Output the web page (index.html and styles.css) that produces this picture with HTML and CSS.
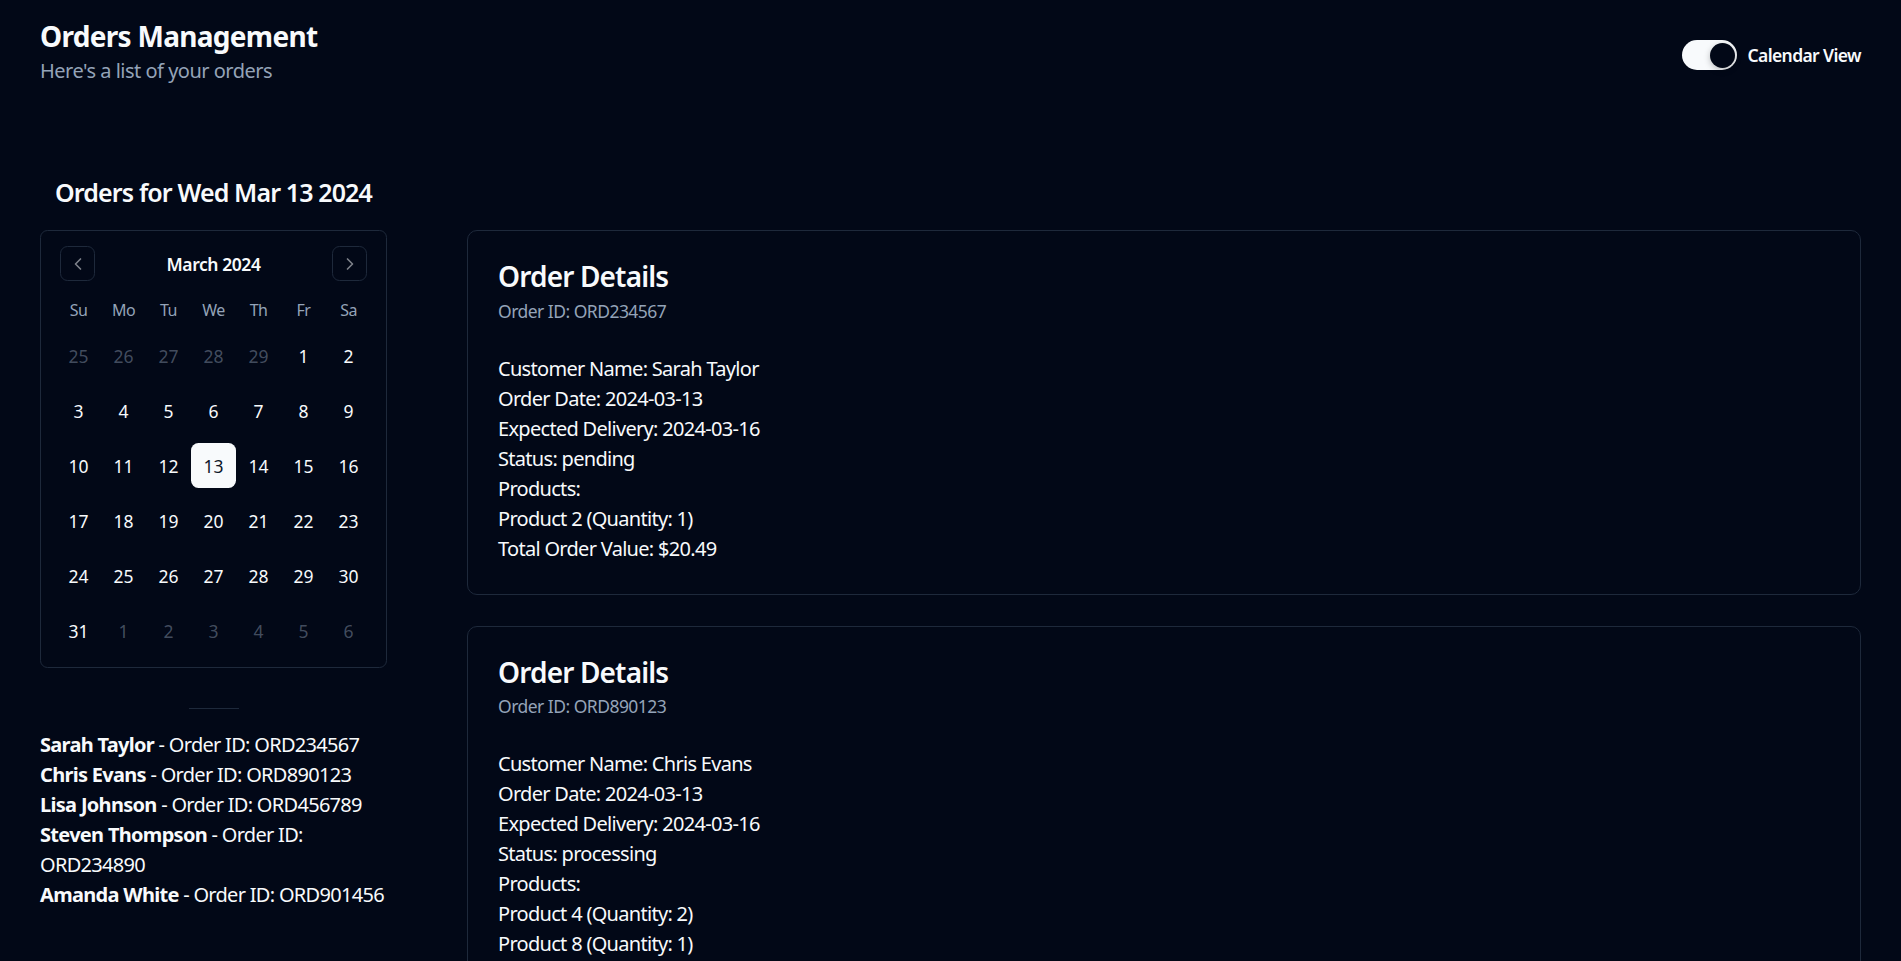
FILE: index.html
```html
<!DOCTYPE html>
<html lang="en">
<head>
<meta charset="utf-8">
<title>Orders Management</title>
<link rel="stylesheet" href="styles.css">
</head>
<body>
<div class="page">
  <header class="top">
    <div class="titles">
      <h1 class="title">Orders Management</h1>
      <p class="subtitle">Here's a list of your orders</p>
    </div>
    <div class="view-toggle">
      <button class="switch on" aria-label="Calendar View"><span class="thumb"></span></button>
      <span class="switch-label">Calendar View</span>
    </div>
  </header>

  <main class="content">
    <aside class="left">
      <h2 class="day-heading">Orders for Wed Mar 13 2024</h2>
      <div class="calendar">
        <div class="caption">
          <button class="nav nav-prev" aria-label="Previous month">
            <svg viewBox="0 0 24 24" width="20" height="20" fill="none" stroke="currentColor" stroke-width="2" stroke-linecap="round" stroke-linejoin="round"><path d="m15 18-6-6 6-6"/></svg>
          </button>
          <span class="month">March 2024</span>
          <button class="nav nav-next" aria-label="Next month">
            <svg viewBox="0 0 24 24" width="20" height="20" fill="none" stroke="currentColor" stroke-width="2" stroke-linecap="round" stroke-linejoin="round"><path d="m9 18 6-6-6-6"/></svg>
          </button>
        </div>
        <div class="head-row">
          <span>Su</span><span>Mo</span><span>Tu</span><span>We</span><span>Th</span><span>Fr</span><span>Sa</span>
        </div>
        <div class="week"><span class="day out">25</span><span class="day out">26</span><span class="day out">27</span><span class="day out">28</span><span class="day out">29</span><span class="day">1</span><span class="day">2</span></div>
        <div class="week"><span class="day">3</span><span class="day">4</span><span class="day">5</span><span class="day">6</span><span class="day">7</span><span class="day">8</span><span class="day">9</span></div>
        <div class="week"><span class="day">10</span><span class="day">11</span><span class="day">12</span><span class="day selected">13</span><span class="day">14</span><span class="day">15</span><span class="day">16</span></div>
        <div class="week"><span class="day">17</span><span class="day">18</span><span class="day">19</span><span class="day">20</span><span class="day">21</span><span class="day">22</span><span class="day">23</span></div>
        <div class="week"><span class="day">24</span><span class="day">25</span><span class="day">26</span><span class="day">27</span><span class="day">28</span><span class="day">29</span><span class="day">30</span></div>
        <div class="week"><span class="day">31</span><span class="day out">1</span><span class="day out">2</span><span class="day out">3</span><span class="day out">4</span><span class="day out">5</span><span class="day out">6</span></div>
      </div>
      <hr class="sep">
      <ul class="order-list">
        <li><strong>Sarah Taylor</strong> - Order ID: ORD234567</li>
        <li><strong>Chris Evans</strong> - Order ID: ORD890123</li>
        <li><strong>Lisa Johnson</strong> - Order ID: ORD456789</li>
        <li><strong>Steven Thompson</strong> - Order ID: ORD234890</li>
        <li><strong>Amanda White</strong> - Order ID: ORD901456</li>
      </ul>
    </aside>

    <section class="right">
      <article class="card">
        <div class="card-header">
          <h3 class="card-title">Order Details</h3>
          <p class="card-desc">Order ID: ORD234567</p>
        </div>
        <div class="card-body">
          <p>Customer Name: Sarah Taylor</p>
          <p>Order Date: 2024-03-13</p>
          <p>Expected Delivery: 2024-03-16</p>
          <p>Status: pending</p>
          <p>Products:</p>
          <p>Product 2 (Quantity: 1)</p>
          <p>Total Order Value: $20.49</p>
        </div>
      </article>
      <article class="card">
        <div class="card-header">
          <h3 class="card-title">Order Details</h3>
          <p class="card-desc">Order ID: ORD890123</p>
        </div>
        <div class="card-body">
          <p>Customer Name: Chris Evans</p>
          <p>Order Date: 2024-03-13</p>
          <p>Expected Delivery: 2024-03-16</p>
          <p>Status: processing</p>
          <p>Products:</p>
          <p>Product 4 (Quantity: 2)</p>
          <p>Product 8 (Quantity: 1)</p>
          <p>Total Order Value: $65.97</p>
        </div>
      </article>
      <article class="card">
        <div class="card-header">
          <h3 class="card-title">Order Details</h3>
          <p class="card-desc">Order ID: ORD456789</p>
        </div>
        <div class="card-body">
          <p>Customer Name: Lisa Johnson</p>
          <p>Order Date: 2024-03-13</p>
          <p>Expected Delivery: 2024-03-17</p>
          <p>Status: shipped</p>
          <p>Products:</p>
          <p>Product 1 (Quantity: 3)</p>
          <p>Total Order Value: $44.97</p>
        </div>
      </article>
    </section>
  </main>
</div>
</body>
</html>
```

FILE: styles.css
```css
* { box-sizing: border-box; letter-spacing: -0.035em; }
html, body {
  margin: 0;
  background: #020817;
  color: #f8fafc;
  font-family: "Noto Sans", "Open Sans", sans-serif;
}
p, h1, h2, h3, ul { margin: 0; padding: 0; }
button { font-family: inherit; }

.page { padding: 16px 40px 40px; }

.top {
  display: flex;
  justify-content: space-between;
  align-items: flex-start;
}
.title {
  font-size: 28px;
  line-height: 40px;
  font-weight: 700;
  letter-spacing: -0.025em;
}
.subtitle {
  font-size: 20px;
  line-height: 30px;
  color: #94a3b8;
  letter-spacing: -0.025em;
}
.view-toggle {
  display: flex;
  align-items: center;
  gap: 10px;
  margin-top: 24px;
}
.switch {
  width: 55px;
  height: 30px;
  border-radius: 999px;
  border: 2px solid transparent;
  background: #f8fafc;
  padding: 0;
  display: flex;
  align-items: center;
  justify-content: flex-end;
  cursor: pointer;
}
.thumb {
  width: 25px;
  height: 25px;
  border-radius: 50%;
  background: #020817;
  box-shadow: 0 2px 6px rgba(0,0,0,0.25);
}
.switch-label {
  font-size: 17.5px;
  font-weight: 600;
  line-height: 22px;
}

.content {
  display: flex;
  gap: 80px;
  margin-top: 89px;
  align-items: flex-start;
}
.left { width: 347px; flex: none; }
.right { flex: 1; margin-top: 55px; display: flex; flex-direction: column; gap: 31px; }

.day-heading {
  font-size: 25px;
  line-height: 35px;
  font-weight: 600;
  text-align: center;
  margin-bottom: 20px;
}

.calendar {
  border: 1px solid #1e293b;
  border-radius: 7.5px;
  padding: 15px 15px 14px;
}
.caption {
  position: relative;
  height: 35px;
  display: flex;
  align-items: center;
  justify-content: center;
}
.month { font-size: 17.5px; font-weight: 600; letter-spacing: -0.025em; }
.nav {
  position: absolute;
  top: 0;
  width: 35px;
  height: 35px;
  border: 1px solid #1e293b;
  border-radius: 7.5px;
  background: transparent;
  color: rgba(248,250,252,0.5);
  display: flex;
  align-items: center;
  justify-content: center;
  padding: 0;
}
.nav-prev { left: 4px; }
.nav-next { right: 4px; }
.head-row {
  display: grid;
  grid-template-columns: repeat(7, 45px);
  margin-top: 20px;
  height: 22px;
  font-size: 16px;
  line-height: 18px;
  color: #94a3b8;
  text-align: center;
}
.week {
  display: grid;
  grid-template-columns: repeat(7, 45px);
  margin-top: 10px;
}
.day {
  height: 45px;
  display: flex;
  align-items: center;
  justify-content: center;
  font-size: 17.5px;
  border-radius: 7.5px;
  letter-spacing: 0;
}
.day.out { color: rgba(148,163,184,0.45); }
.day.selected { background: #f8fafc; color: #0f172a; }

.sep {
  width: 50px;
  height: 1px;
  border: 0;
  background: #1e293b;
  margin: 40px auto 21px;
}
.order-list {
  list-style: none;
  font-size: 20px;
  line-height: 30px;
  width: 360px;
}
.order-list strong { font-weight: 700; }

.card {
  border: 1px solid #1e293b;
  border-radius: 10px;
  background: #020817;
}
.card-header {
  padding: 30px 30px 30px;
  display: flex;
  flex-direction: column;
  gap: 7.5px;
}
.card-title {
  font-size: 28px;
  line-height: 30px;
  font-weight: 600;
  letter-spacing: -0.03em;
}
.card-desc {
  font-size: 17.5px;
  line-height: 25px;
  color: #94a3b8;
  letter-spacing: -0.03em;
}
.card-body {
  padding: 0 30px 30px;
  font-size: 20px;
  line-height: 30px;
}
```
